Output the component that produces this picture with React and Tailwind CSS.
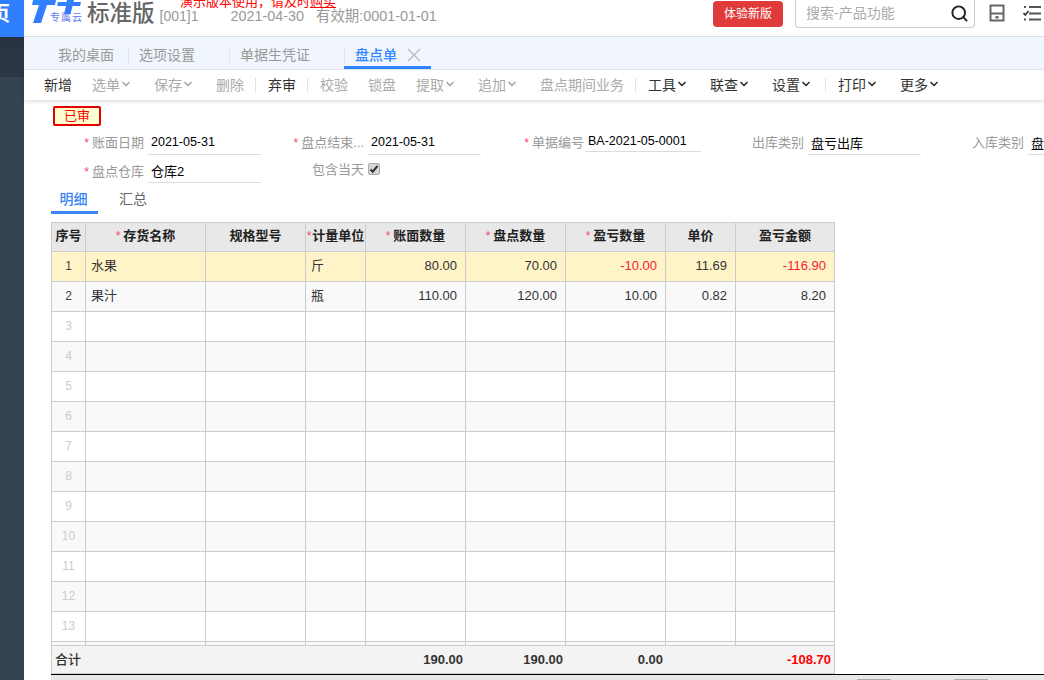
import { ChevronDown, Search, X } from "lucide-react";

const FONT = "font-['Liberation_Sans','Noto_Sans_CJK_SC',sans-serif]";

const toolbarItems = [
  { label: "新增", on: true },
  { label: "选单", arrow: true },
  { label: "保存", arrow: true },
  { label: "删除" },
  { divider: true },
  { label: "弃审", on: true },
  { divider: true },
  { label: "校验" },
  { label: "锁盘" },
  { label: "提取", arrow: true },
  { label: "追加", arrow: true },
  { label: "盘点期间业务" },
  { divider: true },
  { label: "工具", on: true, arrow: true },
  { label: "联查", on: true, arrow: true },
  { label: "设置", on: true, arrow: true },
  { divider: true },
  { label: "打印", on: true, arrow: true },
  { label: "更多", on: true, arrow: true },
];

const rows = [
  { no: 1, name: "水果", unit: "斤", book: "80.00", count: "70.00", diff: "-10.00", price: "11.69", amount: "-116.90" },
  { no: 2, name: "果汁", unit: "瓶", book: "110.00", count: "120.00", diff: "10.00", price: "0.82", amount: "8.20" },
  ...[3, 4, 5, 6, 7, 8, 9, 10, 11, 12, 13, 14].map((no) => ({ no })),
];

function Cols() {
  return (
    <colgroup>
      <col className="w-[34px]" />
      <col className="w-[120px]" />
      <col className="w-[100px]" />
      <col className="w-[60px]" />
      <col className="w-[100px]" />
      <col className="w-[100px]" />
      <col className="w-[100px]" />
      <col className="w-[70px]" />
      <col className="w-[99px]" />
    </colgroup>
  );
}

function Star() {
  return <span className="text-[#f4476b] text-[12px] mr-[3px]">*</span>;
}

function Field({ label, value, required, small, cjk, low }) {
  return (
    <div className="flex w-[220px] shrink-0 h-[24px]">
      <div className={`w-[92px] shrink-0 text-right text-[13px] text-[#999] pr-[4px] whitespace-nowrap ${low ? "leading-[26px]" : "leading-[23px]"}`}>
        {required && <Star />}
        {label}
      </div>
      {small ? (
        <div className="w-[116px] -ml-[3px] h-[21px] border-b border-[#ddd] text-[12.5px] text-black leading-[20px] pl-[3px]">{value}</div>
      ) : (
        <div className={`w-[113px] shrink-0 h-[24px] border-b border-[#ddd] text-black pl-[3px] whitespace-nowrap ${cjk ? "text-[13px] leading-[25px]" : "text-[12.5px] leading-[23px]"}`}>{value}</div>
      )}
    </div>
  );
}

function Th({ children, required, narrow }) {
  return (
    <th className={`h-[29px] pb-[2px] border-r border-b border-[#ccc] bg-[#e8e8e8] text-[13px] font-bold text-[#222] text-center whitespace-nowrap ${narrow ? "px-0" : ""}`}>
      {required && <span className={`text-[#f4476b] font-normal text-[12px] ${narrow ? "mr-[1px]" : "mr-[3px]"}`}>*</span>}
      {children}
    </th>
  );
}

function Num({ children, red }) {
  return <td className={`pb-px border-r border-b border-[#ccc] text-right pr-[8px] text-[13px] ${red ? "text-[#f5222d]" : "text-[#333]"}`}>{children}</td>;
}

export default function App() {
  return (
    <div className={`flex w-[1044px] h-[680px] overflow-hidden bg-white ${FONT}`}>
      {/* left nav, only its edge is on screen */}
      <aside className="w-[24px] shrink-0 flex flex-col bg-[#35434f] overflow-hidden">
        <div className="h-[37px] bg-[#2f80ff] text-white text-[20px] font-bold leading-[28px] whitespace-nowrap">
          <span className="block -ml-[10px]">页</span>
        </div>
        <div className="h-[40px] bg-gradient-to-b from-[#283242] to-[#2b3646]"></div>
      </aside>

      <main className="flex-1 min-w-0 flex flex-col">
        <header className="relative h-[37px] shrink-0 border-b border-[#ddd] flex items-start overflow-hidden">
          <div className="absolute left-[156px] -top-[8px] text-[13px] text-[#f00] whitespace-nowrap">
            演示版本使用，请及时<span className="underline">购买</span>
          </div>
          <div className="relative w-[60px] h-[28px] ml-[3px] shrink-0">
            <svg width="56" height="24" viewBox="0 0 56 24" className="absolute left-0 top-0">
              <defs>
                <linearGradient id="tt" x1="0" y1="0" x2="1" y2="1">
                  <stop offset="0" stopColor="#2a8cff" />
                  <stop offset="1" stopColor="#3f6bff" />
                </linearGradient>
              </defs>
              <polygon points="6,0 29,0 28,5 20,5 14,23 6,23 12,5 5,5" fill="url(#tt)" />
              <polygon points="40,0 47,0 46.500,2 54,2 53,6 45.500,6 43.500,14 37,14 39,6 30,6 31,2 39.500,2" fill="url(#tt)" />
            </svg>
            <span className="absolute left-[23px] top-[13px] text-[10px] leading-[10px] text-[#5a78f0] tracking-[1px] whitespace-nowrap">专属云</span>
          </div>
          <div className="mt-[1px] text-[22.500px] leading-[26px] font-medium text-[#666] whitespace-nowrap">标准版</div>
          <div className="ml-[5px] mt-[7px] text-[14px] leading-[18px] text-[#999] whitespace-nowrap">[001]1</div>
          <div className="ml-[32px] mt-[7px] text-[14.400px] leading-[18px] text-[#999] whitespace-nowrap">2021-04-30</div>
          <div className="ml-[12px] mt-[7px] text-[14.400px] leading-[18px] text-[#999] whitespace-nowrap">有效期:0001-01-01</div>
          <div className="ml-auto flex items-start">
            <button className="mt-[1px] w-[70px] h-[26px] rounded-[4px] bg-[#e03a3a] text-white text-[12px]">体验新版</button>
            <div className="ml-[12px] w-[180px] h-[29px] border border-t-0 border-[#ccc] rounded-b-[4px] flex items-center pl-[10px] pr-[5px] -mt-[1px]">
              <span className="text-[14px] text-[#aaa]">搜索-产品功能</span>
              <Search size={19} strokeWidth={2.400} className="ml-auto text-[#222]" />
            </div>
            <svg width="16" height="18" viewBox="0 0 16 18" className="ml-[14px] mt-[4px]">
              <rect x="1.500" y="1.500" width="13" height="15" fill="none" stroke="#666" strokeWidth="2" />
              <line x1="2" y1="9.500" x2="14" y2="9.500" stroke="#666" strokeWidth="2" />
              <rect x="6.500" y="12" width="3" height="2.500" fill="#666" />
            </svg>
            <svg width="18" height="18" viewBox="0 0 18 18" className="ml-[18px] mr-[3px] mt-[4px]">
              <path d="M1 3h2M6 3h12M6 9.500h12M1 15.500h2M6 15.500h12" stroke="#555" strokeWidth="2" fill="none" />
              <path d="M0.500 9l1.800 2L5.500 7" stroke="#333" strokeWidth="1.600" fill="none" />
            </svg>
          </div>
        </header>

        <nav className="h-[33px] shrink-0 bg-[#f1f5fd] border-b border-[#e3e8f0] flex items-stretch text-[14px] text-[#999]">
          <div className="ml-[34px] mt-[8px] leading-[20px]">我的桌面</div>
          <div className="ml-[14px] mt-[10px] h-[16px] w-px bg-[#dfe3ea]"></div>
          <div className="ml-[10px] mt-[8px] leading-[20px]">选项设置</div>
          <div className="ml-[34px] mt-[10px] h-[16px] w-px bg-[#dfe3ea]"></div>
          <div className="ml-[10px] mt-[8px] leading-[20px]">单据生凭证</div>
          <div className="ml-[34px] mt-[10px] h-[16px] w-px bg-[#dfe3ea]"></div>
          <div className="-ml-px w-[87px] h-[32px] border-b-[3px] border-[#2f86ff] flex items-start pl-[11px] pt-[8px]">
            <span className="leading-[20px] text-[#2f86ff] font-medium">盘点单</span>
            <X size={22} strokeWidth={1.500} className="ml-[6px] -mt-[1px] text-[#bbb]" />
          </div>
        </nav>

        <div className="relative h-[30px] shrink-0 flex items-center gap-5 pl-[20px] shadow-[0_2px_4px_rgba(0,0,0,0.12)] text-[14px] whitespace-nowrap">
          {toolbarItems.map((item, i) =>
            item.divider ? (
              <div key={i} className="w-px h-[14px] bg-[#dde3ec] -ml-[9px] -mr-[8px]"></div>
            ) : (
              <div key={i} className={`flex items-center ${item.on ? "text-[#333]" : "text-[#aaa]"}`}>
                {item.label}
                {item.arrow && <ChevronDown size={12} strokeWidth={3.500} className="mr-[2px] -mt-[2px]" />}
              </div>
            )
          )}
        </div>

        <div className="flex-1 min-h-0 flex flex-col">
          <div className="ml-[29px] mt-[6px] w-[48px] h-[20px] border-2 border-[#e60000] rounded-[2px] bg-[#ffffd0] text-[#f00] text-[13px] leading-[16px] text-center">已审</div>

          <div className="ml-[32px] mt-[5px] flex overflow-hidden">
            <Field label="账面日期" value="2021-05-31" required />
            <Field label="盘点结束..." value="2021-05-31" required />
            <Field label="单据编号" value="BA-2021-05-0001" required small />
            <Field label="出库类别" value="盘亏出库" cjk />
            <Field label="入库类别" value="盘亏入库" cjk />
          </div>
          <div className="ml-[32px] mt-[4px] flex">
            <Field label="盘点仓库" value="仓库2" required cjk low />
            <div className="flex w-[220px] h-[24px]">
              <div className="w-[92px] text-right text-[13px] text-[#999] leading-[22px] pr-[4px]">包含当天</div>
              <div className="mt-[4px] w-[12px] h-[12px] rounded-[2px] bg-[#d8d8d8] border border-[#aaa] flex items-center justify-center">
                <svg width="10" height="10" viewBox="0 0 10 10">
                  <path d="M1.500 5.500l2.200 2.200L8.500 2" stroke="#333" strokeWidth="2" fill="none" />
                </svg>
              </div>
            </div>
          </div>

          <div className="ml-[27px] mt-[3px] flex items-start h-[28px] text-[14px]">
            <div className="w-[47px] h-[28px] border-b-[3px] border-[#3a86f5] pr-[2px] text-center text-[#3a86f5] font-medium leading-[26px]">明细</div>
            <div className="ml-[21px] text-[#666] leading-[26px]">汇总</div>
          </div>

          <div className="ml-[27px] mt-[8px] w-[784px] h-[423px] overflow-hidden border-t border-l border-[#ccc]">
            <table className="table-fixed w-[783px] border-separate border-spacing-0">
              <Cols />
              <thead>
                <tr>
                  <Th>序号</Th>
                  <Th required>存货名称</Th>
                  <Th>规格型号</Th>
                  <Th required narrow>计量单位</Th>
                  <Th required>账面数量</Th>
                  <Th required>盘点数量</Th>
                  <Th required>盈亏数量</Th>
                  <Th>单价</Th>
                  <Th>盈亏金额</Th>
                </tr>
              </thead>
              <tbody>
                {rows.map((r) => (
                  <tr key={r.no} className={r.no === 1 ? "h-[30px] bg-[#fff4c8]" : r.no % 2 === 0 ? "h-[30px] bg-[#f9f9f9]" : "h-[30px] bg-white"}>
                    <td className={`pb-px border-r border-b border-[#ccc] text-center text-[12px] ${r.no <= 2 ? "text-[#444]" : "text-[#ccc]"}`}>{r.no < 14 ? r.no : ""}</td>
                    <td className="pb-px border-r border-b border-[#ccc] pl-[5px] text-[13px] text-[#333]">{r.name}</td>
                    <td className="border-r border-b border-[#ccc]"></td>
                    <td className="pb-px border-r border-b border-[#ccc] pl-[5px] text-[13px] text-[#333]">{r.unit}</td>
                    <Num>{r.book}</Num>
                    <Num>{r.count}</Num>
                    <Num red={r.no === 1}>{r.diff}</Num>
                    <Num>{r.price}</Num>
                    <Num red={r.no === 1}>{r.amount}</Num>
                  </tr>
                ))}
              </tbody>
            </table>
          </div>

          <div className="ml-[27px] w-[784px] h-[29px] border border-[#ccc] bg-[#f3f3f3] shrink-0 overflow-hidden">
            <table className="table-fixed w-[783px] border-separate border-spacing-0 h-[27px]">
              <Cols />
              <tbody>
                <tr className="text-[13px] font-bold text-[#333]">
                  <td colSpan={4} className="pl-[3px] font-medium">合计</td>
                  <td className="text-right pr-[3px]">190.00</td>
                  <td className="text-right pr-[3px]">190.00</td>
                  <td className="text-right pr-[3px]">0.00</td>
                  <td></td>
                  <td className="text-right pr-[4px] text-[#f00]">-108.70</td>
                </tr>
              </tbody>
            </table>
          </div>

          <div className="ml-[27px] flex-1 border-t border-black bg-[#e8e8e8] flex items-end pl-[806px]">
            <div className="w-[34px] h-px bg-[#aaa]"></div>
            <div className="ml-[63px] w-[34px] h-px bg-[#aaa]"></div>
          </div>
        </div>
      </main>
    </div>
  );
}
